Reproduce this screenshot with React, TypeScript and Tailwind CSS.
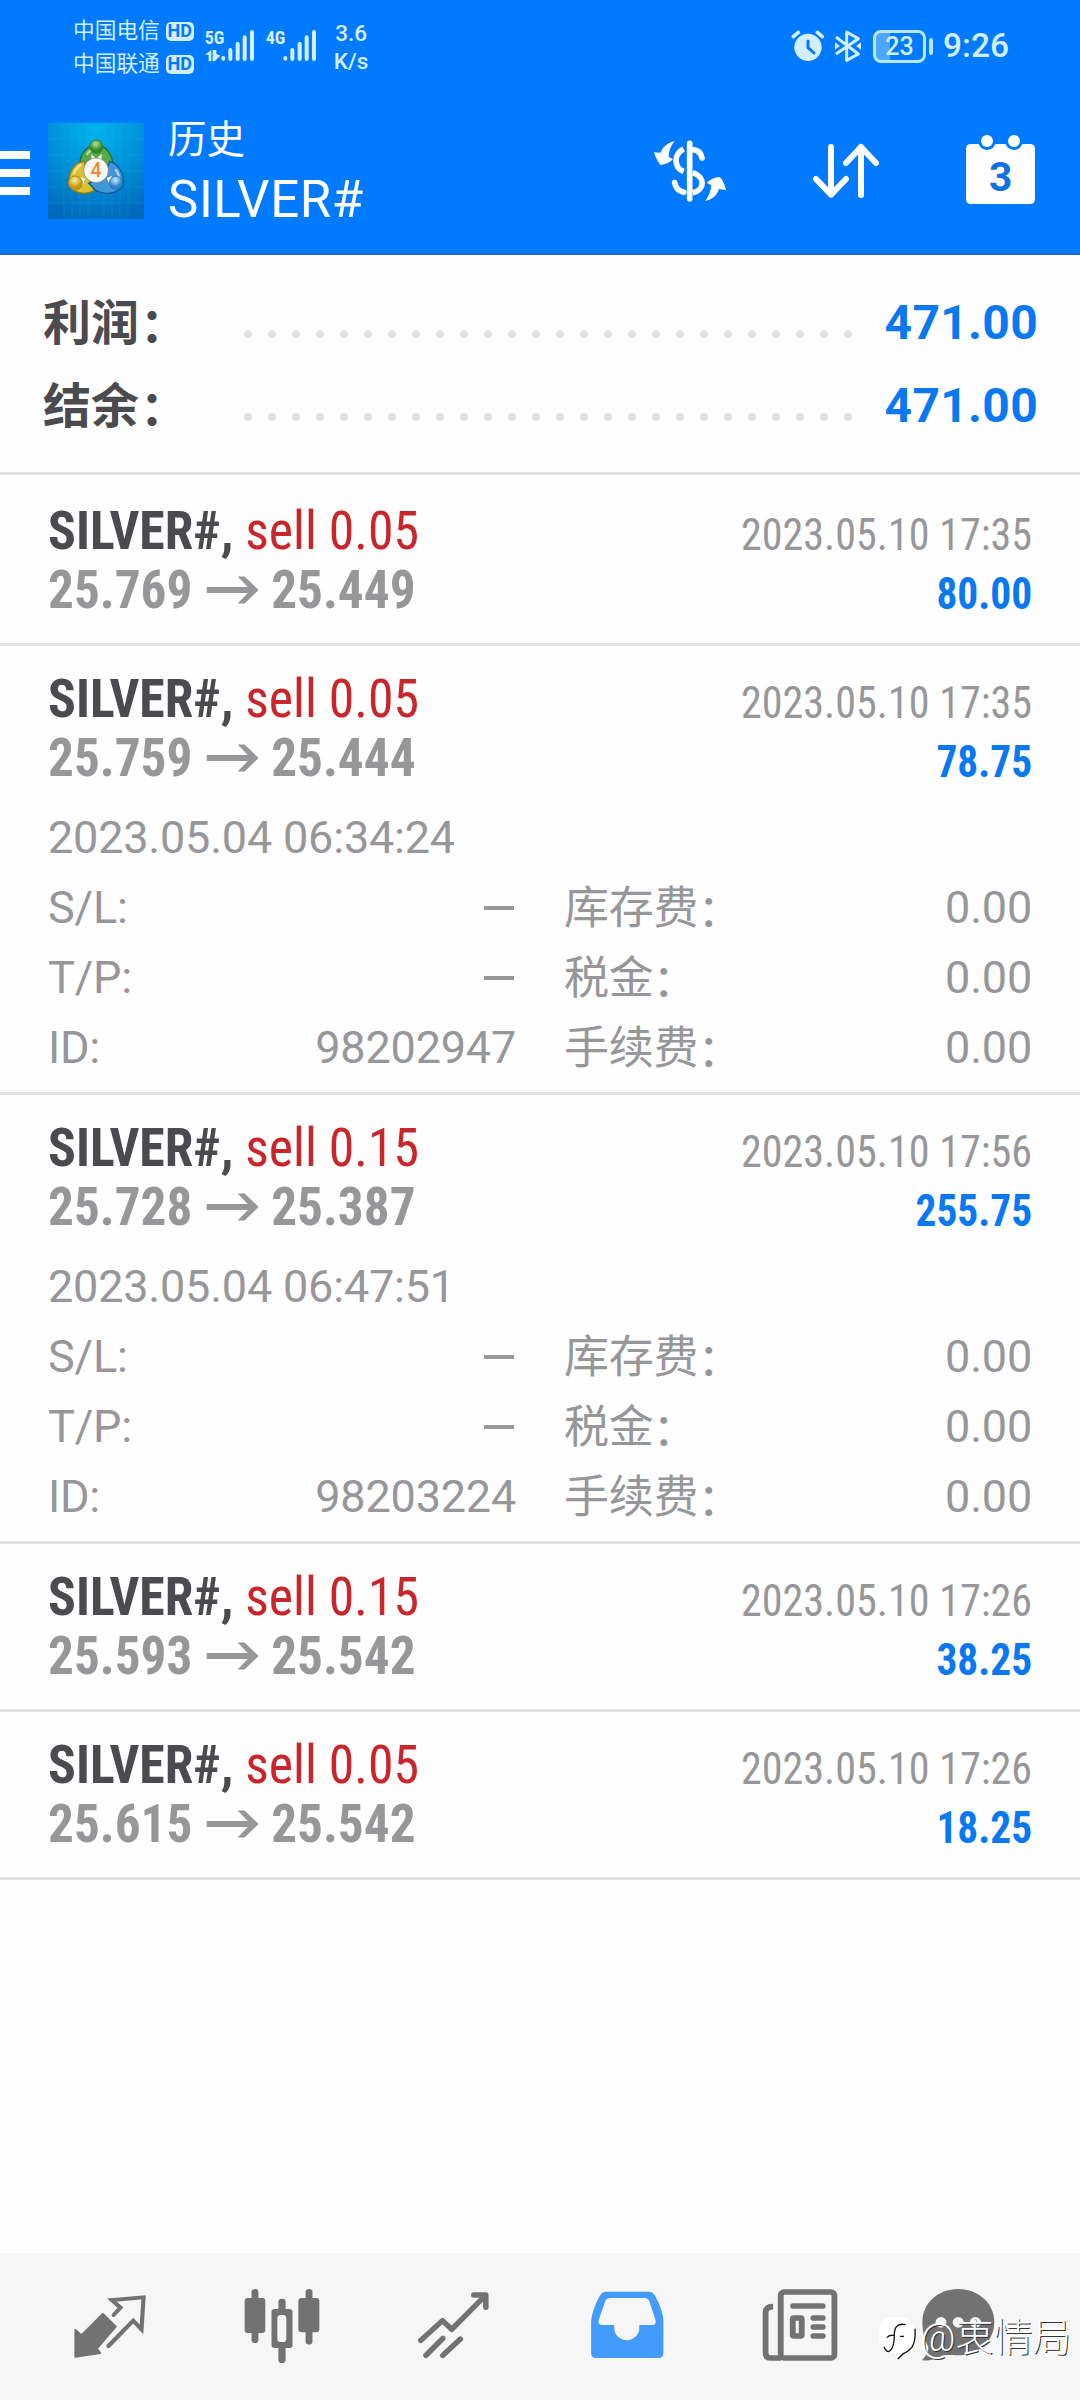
import React from "react";

const CJK = "font-['Roboto','Noto_Sans_CJK_SC',sans-serif]";

function Dots() {
  return (
    <div className="flex w-[608px] justify-between">
      {Array.from({ length: 26 }, (_, i) => (
        <span key={i} className="size-2 rounded-full bg-[#e0e0e2]" />
      ))}
    </div>
  );
}

function SummaryRow({ label, value }: { label: string; value: string }) {
  return (
    <div className="flex h-[83px] items-center pr-[42px] pl-[43px] font-bold">
      <div className="w-[201px] text-[48px] leading-none text-[#4a4a4f]">
        {label}
        <span className="inline-block translate-x-px translate-y-[2px]">：</span>
      </div>
      <div className="pt-[21px]">
        <Dots />
      </div>
      <div className="flex-1 -translate-y-px text-right text-[48px] leading-none tracking-[0.3px] text-[#0a78f0]">{value}</div>
    </div>
  );
}

type Deal = {
  lot: string;
  from: string;
  to: string;
  time: string;
  profit: string;
  opened?: string;
  id?: string;
};

const deals: Deal[] = [
  { lot: "0.05", from: "25.769", to: "25.449", time: "2023.05.10 17:35", profit: "80.00" },
  { lot: "0.05", from: "25.759", to: "25.444", time: "2023.05.10 17:35", profit: "78.75", opened: "2023.05.04 06:34:24", id: "98202947" },
  { lot: "0.15", from: "25.728", to: "25.387", time: "2023.05.10 17:56", profit: "255.75", opened: "2023.05.04 06:47:51", id: "98203224" },
  { lot: "0.15", from: "25.593", to: "25.542", time: "2023.05.10 17:26", profit: "38.25" },
  { lot: "0.05", from: "25.615", to: "25.542", time: "2023.05.10 17:26", profit: "18.25" },
];

function Arrow() {
  return (
    <svg className="mr-[13px] ml-[15px] h-7 w-[55px]" viewBox="0 0 52 28" preserveAspectRatio="none" fill="#97979a">
      <path d="M0 11H46V17H0Z" />
      <path d="M31 0.5H38L52 14L38 27.5H31L44 14Z" />
    </svg>
  );
}

function Detail({ a, av, b, bv }: { a: string; av: string; b: string; bv: string }) {
  return (
    <div className="flex h-[70px] items-center">
      <span className="flex-1">{a}</span>
      <span>{av === "-" ? <i className="mr-[2px] block h-1 w-[30px] bg-[#97979a]" /> : av}</span>
      <span className="ml-[48px] w-[241px] translate-y-px">
        {b}
        <span className="inline-block -translate-x-px translate-y-[3px]">：</span>
      </span>
      <span className="w-[227px] text-right">{bv}</span>
    </div>
  );
}

function DealRow({ d, first }: { d: Deal; first: boolean }) {
  return (
    <div className={`border-b-[3px] border-[#e2e2e2] px-12 ${first ? "pt-[27px]" : "pt-[24px]"} ${d.opened ? "pb-[9px]" : "pb-5"}`}>
      <div className="flex justify-between [font-stretch:75%]">
        <div className="-mt-px text-[54px] leading-[59px]">
          <div className="flex h-[59px] origin-left scale-x-[.958] whitespace-pre">
            <b className="text-[#4a4a4f]">SILVER#, </b>
            <span className="text-[#c9252b]">sell {d.lot}</span>
          </div>
          <div className="flex h-[59px] origin-left scale-x-[.949] items-center font-bold text-[#97979a]">
            {d.from}
            <Arrow />
            {d.to}
          </div>
        </div>
        <div className="pt-[3px] text-right text-[45px] leading-[59px]">
          <div className="origin-right scale-x-[.936] text-[#97979a]">{d.time}</div>
          <div className="origin-right scale-x-[.92] font-bold text-[#0a78f0]">{d.profit}</div>
        </div>
      </div>
      {d.opened && (
        <div className="pt-3 text-[45px] leading-[70px] tracking-[-0.2px] text-[#97979a]">
          <div className="h-[70px]">{d.opened}</div>
          <Detail a="S/L:" av="-" b="库存费" bv="0.00" />
          <Detail a="T/P:" av="-" b="税金" bv="0.00" />
          <Detail a="ID:" av={d.id!} b="手续费" bv="0.00" />
        </div>
      )}
    </div>
  );
}

function Hd() {
  return (
    <span className="flex h-[19px] w-[28px] items-center justify-center rounded-[5px] bg-[#d2efff] text-[18px] leading-none font-bold text-[#007aff]">
      HD
    </span>
  );
}

function Bars() {
  return (
    <svg className="h-[32px] w-[34px]" viewBox="664 92 102 96" stroke="#d2efff" strokeWidth="12" strokeLinecap="round">
      <path d="M671 176v2M692 152v27M714 133v46M735 114v65M757 98v81" />
    </svg>
  );
}

function StatusBar() {
  return (
    <div className="flex h-[90px] items-start pl-[73px] text-[#d2efff]">
      <div className="flex flex-col gap-[11px] pt-5 text-[21.7px] leading-[22px]">
        <div className="flex items-center gap-[6px]">中国电信<Hd /></div>
        <div className="flex items-center gap-[6px]">中国联通<Hd /></div>
      </div>
      <div className="ml-[11px] flex w-[52px] pt-[30px]">
        <div className="w-4">
          <div className="text-[18px] leading-[16px] font-bold [font-stretch:75%]">5G</div>
          <svg className="mt-1 h-3 w-[15px]" viewBox="613 150 45 36" fill="#d2efff">
            <path d="M632 150v34h-8v-20h-11zM636 150v34h6l17-17-12-5v-12z" />
          </svg>
        </div>
        <Bars />
      </div>
      <div className="ml-[9px] flex w-[52px] pt-[30px]">
        <div className="w-[17px] text-[18px] leading-[16px] font-bold [font-stretch:75%]">4G</div>
        <Bars />
      </div>
      <div className="ml-4 pt-[19px] text-center text-[22.5px] leading-[28px] font-medium">
        3.6
        <br />
        K/s
      </div>
      <div className="ml-auto flex items-center pt-[29px] pr-[71px]">
        <svg className="h-[34px] w-[34px]" viewBox="516 88 102 102">
          <circle cx="567" cy="143" r="41" fill="#d2efff" />
          <path d="M523 111l15-13M610 111l-15-13" stroke="#d2efff" strokeWidth="11" strokeLinecap="round" />
          <path d="M567 124v20l18 16" fill="none" stroke="#007aff" strokeWidth="9" strokeLinecap="round" strokeLinejoin="round" />
        </svg>
        <svg className="ml-[9px] h-[34px] w-[28px]" viewBox="645 88 84 102" stroke="#d2efff" fill="none" strokeWidth="9">
          <path d="M651 112L718 163L683 182V97L718 117L651 163" strokeLinejoin="round" />
          <path d="M648 128l15 11-15 11zM726 128l-15 11 15 11z" fill="#d2efff" stroke="none" />
        </svg>
        <div className="ml-[11px] flex h-[33px] w-[53px] items-center justify-center rounded-[8px] border-[3px] border-[#b9e6ff] bg-linear-to-r from-[#4da6ff] from-30% to-[#007aff] to-30% text-[25px] leading-none font-medium">
          23
        </div>
        <div className="ml-[3px] h-[17px] w-1 rounded-sm bg-[#b9e6ff]" />
        <div className="ml-[10px] text-[33.5px] leading-[34px] font-medium">9:26</div>
      </div>
    </div>
  );
}

function Logo() {
  return (
    <svg className="h-24 w-24" viewBox="144 369 288 288">
      <defs>
        <radialGradient id="sky" cx="50%" cy="5%" r="100%">
          <stop offset="0" stopColor="#00b4ec" />
          <stop offset=".5" stopColor="#0090d8" />
          <stop offset="1" stopColor="#0068b8" />
        </radialGradient>
        <radialGradient id="gr" cx="45%" cy="30%"><stop offset="0" stopColor="#b5e08c" /><stop offset="1" stopColor="#2f8a2c" /></radialGradient>
        <radialGradient id="ye" cx="45%" cy="30%"><stop offset="0" stopColor="#fff0a0" /><stop offset="1" stopColor="#c39a12" /></radialGradient>
        <radialGradient id="bl" cx="45%" cy="30%"><stop offset="0" stopColor="#c5ecff" /><stop offset="1" stopColor="#2a84cc" /></radialGradient>
      </defs>
      <rect x="144" y="369" width="288" height="288" fill="url(#sky)" />
      <path d="M192 369v288M216 369v288M240 369v288M264 369v288M312 369v288M336 369v288M360 369v288M384 369v288M144 417h288M144 465h288M144 513h288M144 561h288M144 609h288" stroke="#2cc0f0" strokeOpacity=".22" strokeWidth="2" />
      <g strokeWidth="4">
        <path d="M240 500C236 462 262 436 289 434C318 436 342 466 338 505L310 530L262 500Z" fill="#58a848" stroke="#1d6a3a" />
        <path d="M252 484C222 486 203 520 207 556C222 580 256 588 282 572L262 520Z" fill="#d8c030" stroke="#8c7a14" />
        <path d="M330 484C358 494 374 524 370 556C352 582 316 586 288 572L266 550L310 530Z" fill="#3f97d8" stroke="#145a98" />
      </g>
      <path d="M262 462c6-10 14-16 27-18M222 520c4-12 10-18 20-24M348 510c6 8 10 18 9 30" stroke="#fff" strokeOpacity=".55" strokeWidth="7" fill="none" strokeLinecap="round" />
      <path d="M274 462l15 14 16-14v20h-31zM240 532l16 4-8 20zM336 528l-16 6 8 18z" fill="#f4f8e8" />
      <circle cx="289" cy="440" r="20" fill="url(#gr)" stroke="#2a7a30" strokeWidth="2" />
      <circle cx="226" cy="549" r="21" fill="url(#ye)" stroke="#937a10" strokeWidth="2" />
      <circle cx="348" cy="548" r="20" fill="url(#bl)" stroke="#1d68ac" strokeWidth="2" />
      <circle cx="288" cy="511" r="37" fill="#f8f8f4" stroke="#777" strokeWidth="2" />
      <text x="288" y="532" textAnchor="middle" fontSize="58" fontWeight="500" fontFamily="Roboto" fill="#f0873a">4</text>
    </svg>
  );
}

function Header() {
  return (
    <div className="flex h-[165px] items-start border-b-2 border-[#1a6cc8] pt-[33px]">
      <div className="flex w-[30px] flex-col gap-[10px] pt-7">
        <i className="h-2 bg-white" />
        <i className="h-2 bg-white" />
        <i className="h-2 bg-white" />
      </div>
      <div className="ml-[18px]"><Logo /></div>
      <div className="ml-6 text-white">
        <div className="h-[47px] text-[38.5px] leading-[33px]">历史</div>
        <div className="text-[51px] leading-[60px] tracking-[0.6px]">SILVER#</div>
      </div>
      <div className="mt-3 ml-auto flex pr-[38px]">
        <svg className="h-[72px] w-20" viewBox="93 405 240 216" fill="none" stroke="#fff">
          <path d="M209 430V596" strokeWidth="17" strokeLinecap="round" />
          <path d="M191 447C160 462 161 503 191 514" strokeWidth="17" />
          <path d="M218 449C234 450 243 458 246 474" strokeWidth="17" strokeLinecap="round" />
          <path d="M218 518C256 530 256 570 218 578" strokeWidth="17" />
          <path d="M164 548C166 562 176 573 191 577" strokeWidth="17" strokeLinecap="round" />
          <path d="M164 423C146 428 128 438 122 458L102 457C106 472 114 485 121 495C136 494 148 488 159 478L146 470C146 452 152 438 164 423Z" fill="#fff" stroke="none" />
          <path d="M256 603C276 598 290 588 297 567L318 570C315 555 308 540 299 531C284 532 270 538 260 548L274 556C272 574 266 590 256 603Z" fill="#fff" stroke="none" />
        </svg>
        <svg className="ml-[77px] h-[72px] w-20" viewBox="564 405 240 216" fill="none" stroke="#fff" strokeWidth="18" strokeLinecap="round" strokeLinejoin="round">
          <path d="M633 441V584M588 537L633 584L678 537M723 585V441M678 489L723 441L768 489" />
        </svg>
        <svg className="ml-[74px] h-[72px] w-20" viewBox="1026 405 240 216" overflow="visible">
          <rect x="1038" y="432" width="207" height="180" rx="14" fill="#fff" />
          <circle cx="1101" cy="423" r="27" fill="#007aff" />
          <circle cx="1182" cy="423" r="27" fill="#007aff" />
          <circle cx="1101" cy="423" r="18" fill="#fff" />
          <circle cx="1182" cy="423" r="18" fill="#fff" />
          <text x="1142" y="574" textAnchor="middle" fontSize="122" fontWeight="700" fontFamily="Roboto" fill="#0e72e2">3</text>
        </svg>
      </div>
    </div>
  );
}

const navIcon = "h-20 w-[84px] shrink-0 overflow-visible";

function Nav() {
  return (
    <div className="relative mt-auto flex h-[147px] gap-[88.5px] bg-[#f6f6f6] pt-[27px] pl-[68px]">
      <svg className={navIcon} viewBox="197.5 120 244 240" preserveAspectRatio="none" fill="none" stroke="#727272" strokeLinejoin="round">
        <path d="M299 222L336 260L281 326L291 339L219 350V270L236 286Z" fill="#727272" strokeWidth="6" />
        <path d="M330 225L350 203L325 180L417 172L411 268L387 242L315 318" strokeWidth="12" strokeLinecap="round" strokeLinejoin="miter" />
      </svg>
      <svg className={navIcon} viewBox="698.4 120 244 240" preserveAspectRatio="none" fill="#727272">
        <rect x="709" y="174" width="60" height="105" rx="9" />
        <rect x="729" y="147" width="20" height="162" rx="10" />
        <rect x="865" y="174" width="61" height="103" rx="9" />
        <rect x="886" y="147" width="20" height="167" rx="10" />
        <rect x="807" y="176" width="21" height="193" rx="10" />
        <rect x="787" y="207" width="61" height="117" rx="9" />
        <rect x="804" y="225" width="26" height="81" rx="10" fill="#f6f6f6" />
      </svg>
      <svg className={navIcon} viewBox="1199.4 120 244 240" preserveAspectRatio="none" fill="none" stroke="#727272" strokeWidth="16" strokeLinecap="round" strokeLinejoin="round">
        <path d="M1222 301L1285 242L1312 268L1408 168M1376 165H1411V202" />
        <path d="M1237 346L1286 295M1286 346L1337 297" />
      </svg>
      <svg className={navIcon} viewBox="132.1 120 244 240" preserveAspectRatio="none">
        <path d="M190 155H314Q326 155 333 168Q356 210 357 245V340Q357 354 343 354H161Q147 354 147 340V245Q149 210 172 168Q179 155 190 155Z" fill="#439bfb" />
        <path d="M203 174H301Q312 174 316 184L334 240Q337 255 325 255H287V263A36 37 0 0 1 214 263V255H179Q166 255 169 240L188 184Q192 174 203 174Z" fill="#f6f6f6" />
      </svg>
      <svg className={navIcon} viewBox="633 120 244 240" preserveAspectRatio="none" fill="none" stroke="#727272" strokeWidth="17">
        <rect x="699" y="156" width="156" height="198" rx="10" />
        <path d="M677 200Q655 200 655 218V338Q655 354 671 354H700" />
        <path d="M735 198H821M794 234H821M794 261H821M794 288H821" strokeLinecap="round" />
        <rect x="734" y="234" width="26" height="54" rx="3" />
      </svg>
      <svg className={navIcon} viewBox="1134 120 244 240" preserveAspectRatio="none">
        <path d="M1213 147C1272 147 1318 190 1318 246C1318 304 1272 346 1213 346C1188 346 1172 343 1160 350C1140 360 1122 364 1108 360C1120 348 1128 334 1126 320C1115 300 1109 275 1109 246C1109 190 1154 147 1213 147Z" fill="#727272" />
        <g fill="#f6f6f6"><circle cx="1163" cy="247" r="16" /><circle cx="1213" cy="247" r="16" /><circle cx="1263" cy="247" r="16" /></g>
      </svg>
      <div className="absolute top-[62px] right-[9px] flex items-center text-[38.5px] leading-[46px] font-light text-white [text-shadow:1px_1px_0_#333]">
        <svg className="mr-[3px] h-[44px] w-[38px]" viewBox="58 148 114 132" fill="none">
          <path d="M110 150C152 150 166 166 166 204C166 240 152 256 128 262L112 278V262C72 260 58 244 58 204C58 166 72 150 110 150Z" fill="#fff" />
          <path d="M138 174C112 168 104 184 104 204C104 230 100 248 88 254M82 213C88 204 92 206 102 206M121 209H133M166 186C170 240 152 250 131 261L114 277M73 240Q78 254 88 255" stroke="#111" strokeWidth="4" />
        </svg>
        @衷情局
      </div>
    </div>
  );
}

export default function App() {
  return (
    <div className={`${CJK} flex h-[2400px] w-[1080px] flex-col overflow-hidden bg-[#fefefe]`}>
      <div className="bg-[#007aff]">
        <StatusBar />
        <Header />
      </div>
      <div className="h-[220px] border-b-[3px] border-[#e2e2e2] pt-[27px]">
        <SummaryRow label="利润" value="471.00" />
        <SummaryRow label="结余" value="471.00" />
      </div>
      {deals.map((d, i) => (
        <DealRow key={i} d={d} first={i === 0} />
      ))}
      <Nav />
    </div>
  );
}
